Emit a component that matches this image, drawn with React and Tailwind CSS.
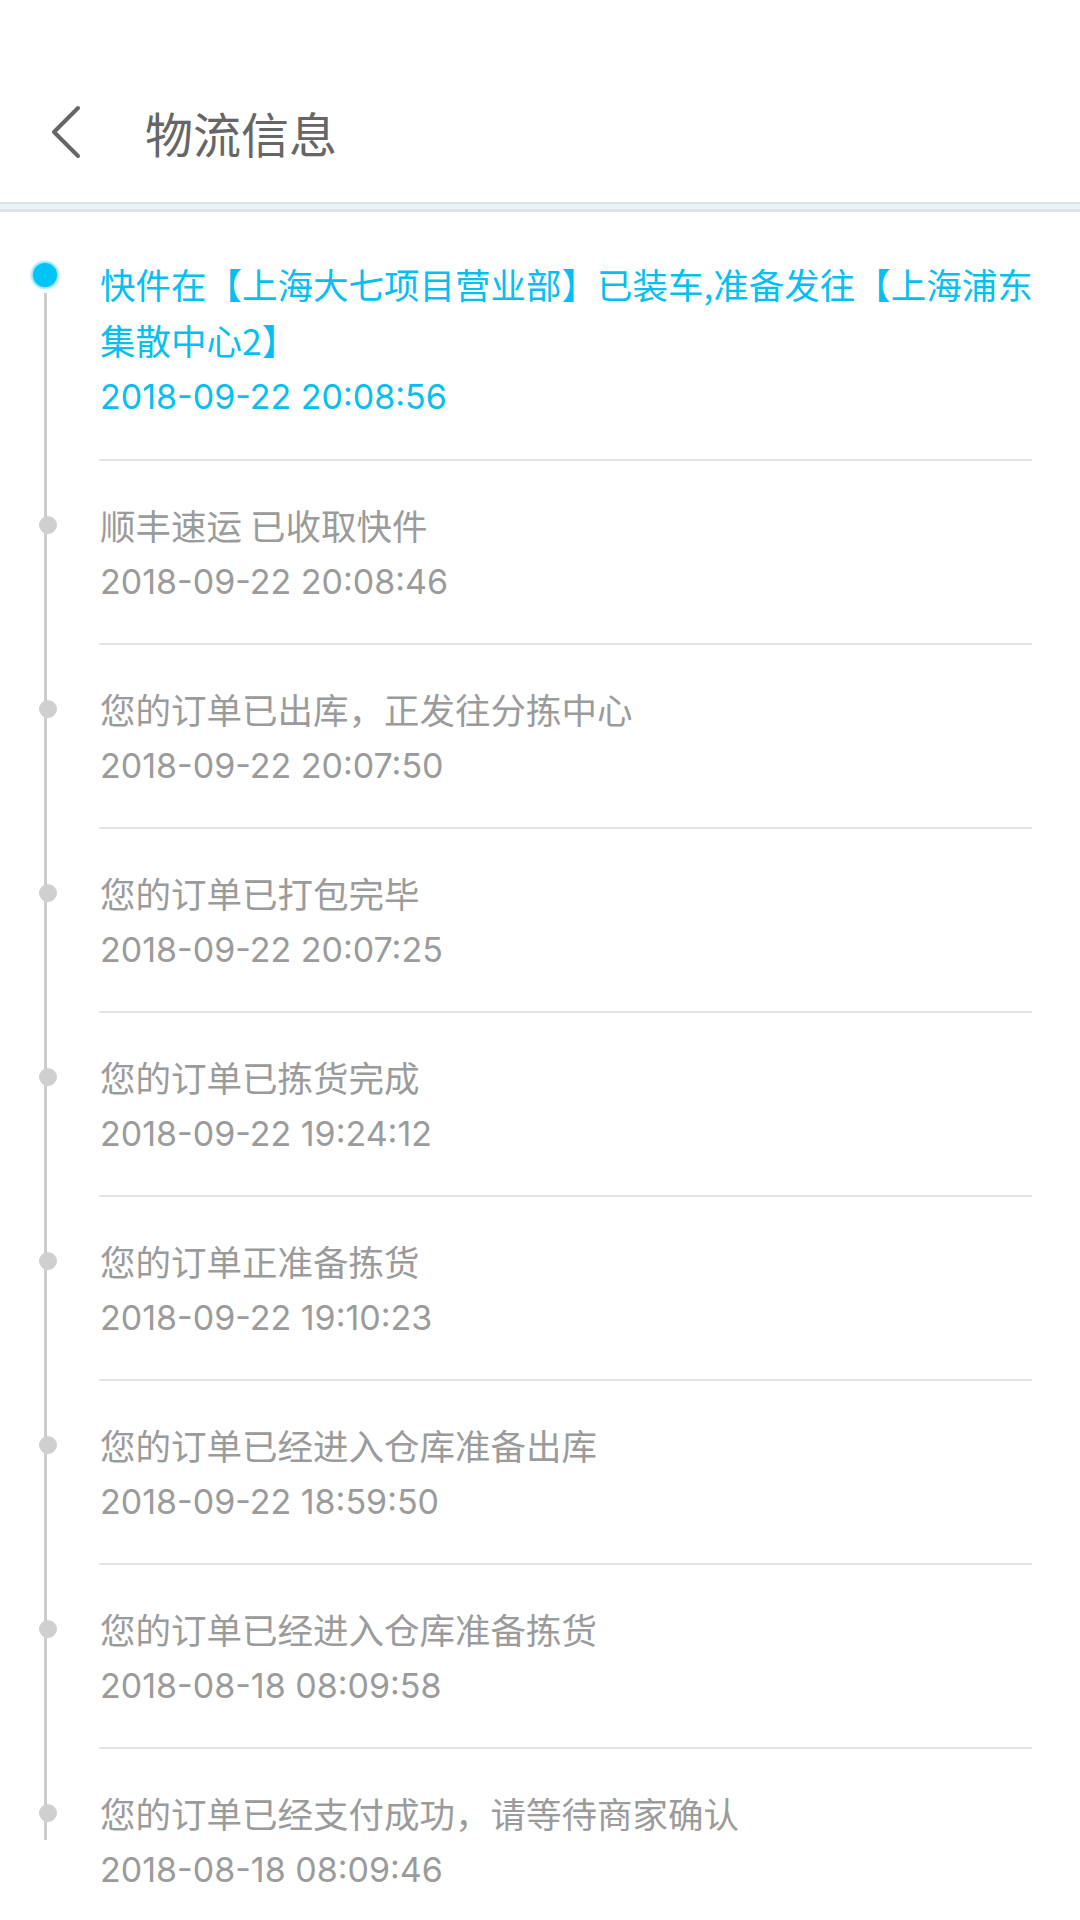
import React from "react";

const items = [
  { t: "快件在【上海大七项目营业部】已装车,准备发往【上海浦东集散中心2】", d: "2018-09-22 20:08:56" },
  { t: "顺丰速运 已收取快件", d: "2018-09-22 20:08:46" },
  { t: "您的订单已出库，正发往分拣中心", d: "2018-09-22 20:07:50" },
  { t: "您的订单已打包完毕", d: "2018-09-22 20:07:25" },
  { t: "您的订单已拣货完成", d: "2018-09-22 19:24:12" },
  { t: "您的订单正准备拣货", d: "2018-09-22 19:10:23" },
  { t: "您的订单已经进入仓库准备出库", d: "2018-09-22 18:59:50" },
  { t: "您的订单已经进入仓库准备拣货", d: "2018-08-18 08:09:58" },
  { t: "您的订单已经支付成功，请等待商家确认", d: "2018-08-18 08:09:46" },
];

const font = { fontFamily: '"Noto Sans CJK SC", "Noto Sans", sans-serif' };
const dateFont = { fontFamily: 'Inter, "Noto Sans CJK SC", sans-serif' };

function Item({ t, d, first, last }) {
  return (
    <div className="flex">
      <div className="relative w-[99px] shrink-0">
        {first ? (
          <>
            <div className="absolute left-[44px] top-[81px] bottom-0 w-[3px] bg-[#cccccc]" />
            <div className="absolute left-[33px] top-[51px] h-[24px] w-[24px] rounded-full bg-[#00c3f6] shadow-[0_0_2px_2px_rgba(0,195,246,0.45)]" />
          </>
        ) : (
          <>
            <div
              className={
                last
                  ? "absolute left-[44px] top-0 h-[91px] w-[3px] bg-[#cccccc]"
                  : "absolute left-[44px] top-0 bottom-0 w-[3px] bg-[#cccccc]"
              }
            />
            <div className="absolute left-[39px] top-[55px] h-[18px] w-[18px] rounded-full bg-[#cfcfcf]" />
          </>
        )}
      </div>
      {first ? (
        <div className="mr-[48px] flex-1 border-b-2 border-[#e5e5e5] pl-[1px] pt-[44px] pb-[33px] text-[#05bff1]">
          <div className="-mr-[16px] text-[35.5px] leading-[56px]">{t}</div>
          <div className="text-[34px] leading-[58px]" style={dateFont}>{d}</div>
        </div>
      ) : (
        <div className="mr-[48px] flex-1 border-b-2 border-[#e5e5e5] pl-[1px] pt-[35px] pb-[33px] text-[#9b9b9b]">
          <div className="text-[35.5px] leading-[57px]">{t}</div>
          <div className="text-[34px] leading-[57px]" style={dateFont}>{d}</div>
        </div>
      )}
    </div>
  );
}

export default function App() {
  return (
    <div className="h-[1920px] w-[1080px] overflow-hidden bg-white" style={font}>
      <div className="h-[202px] pt-[100px]">
        <div className="flex h-[64px] items-center">
          <svg className="ml-[49px]" width="34" height="56" viewBox="0 0 34 56">
            <path d="M29 4 L5 28 L29 52" fill="none" stroke="#666666" strokeWidth="4" strokeLinecap="round" strokeLinejoin="round" />
          </svg>
          <div className="ml-[62px] text-[48px] leading-[64px] text-[#666666]">物流信息</div>
        </div>
      </div>
      <div className="h-[10px] border-t-2 border-b-[3px] border-[#e2e2e2] bg-[#e4f6fc]" />
      <div>
        {items.map((it, i) => (
          <Item key={i} t={it.t} d={it.d} first={i === 0} last={i === items.length - 1} />
        ))}
      </div>
    </div>
  );
}
